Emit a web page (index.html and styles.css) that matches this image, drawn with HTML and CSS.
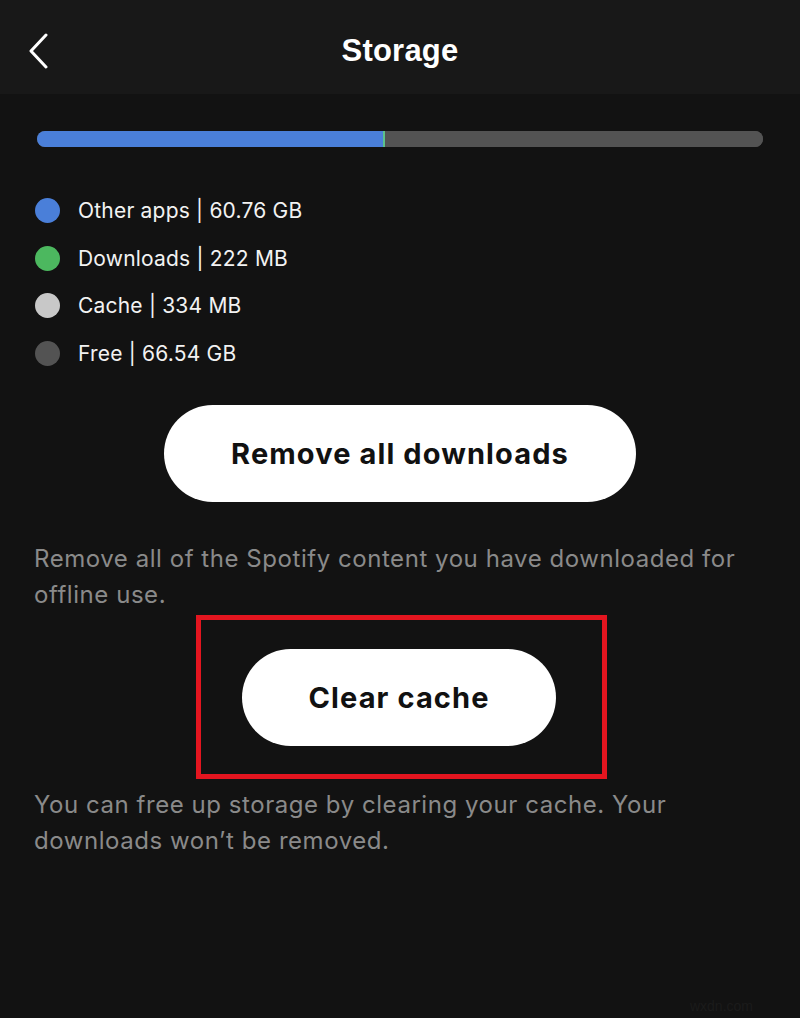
FILE: index.html
```html
<!DOCTYPE html>
<html lang="en">
<head>
<meta charset="utf-8">
<title>Storage</title>
<link rel="stylesheet" href="styles.css">
</head>
<body>
<div class="screen">
  <header class="topbar">
    <button class="back" aria-label="Back">
      <svg width="22" height="36" viewBox="0 0 22 36"><path d="M18 2 L3 18 L18 34" fill="none" stroke="#fff" stroke-width="3" stroke-linecap="round" stroke-linejoin="round"/></svg>
    </button>
    <h1 class="title">Storage</h1>
    <span class="spacer"></span>
  </header>

  <main class="content">
    <div class="usage-bar">
      <span class="seg seg-other" style="width:47.6%"></span>
      <span class="seg seg-downloads" style="width:0.3%"></span>
      <span class="seg seg-cache" style="width:0%"></span>
      <span class="seg seg-free"></span>
    </div>

    <ul class="legend">
      <li><span class="dot dot-other"></span>Other apps | 60.76 GB</li>
      <li><span class="dot dot-downloads"></span>Downloads | 222 MB</li>
      <li><span class="dot dot-cache"></span>Cache | 334 MB</li>
      <li><span class="dot dot-free"></span>Free | 66.54 GB</li>
    </ul>

    <div class="action">
      <button class="pill pill-wide">Remove all downloads</button>
    </div>
    <p class="note note-first">Remove all of the Spotify content you have downloaded for offline use.</p>

    <div class="action">
      <div class="highlight">
        <button class="pill pill-narrow">Clear cache</button>
      </div>
    </div>
    <p class="note note-second">You can free up storage by clearing your cache. Your downloads won’t be removed.</p>

    <div class="mark">wxdn.com</div>
  </main>
</div>
</body>
</html>
```

FILE: styles.css
```css
* {
  box-sizing: border-box;
}

html, body {
  margin: 0;
  padding: 0;
  background: #121212;
}

.screen {
  width: 800px;
  height: 1018px;
  background: #121212;
  display: flex;
  flex-direction: column;
  font-family: Inter, "Noto Sans", sans-serif;
  color: #fff;
  overflow: hidden;
}

/* top bar */
.topbar {
  height: 94px;
  background: #181818;
  display: grid;
  grid-template-columns: 90px 1fr 90px;
  align-items: center;
}

.back {
  background: none;
  border: 0;
  padding: 0 0 0 28px;
  margin-top: 8px;
  display: flex;
  align-items: center;
  cursor: pointer;
}

.title {
  margin: 7px 0 0 0;
  text-align: center;
  font-family: "Liberation Sans", Arial, sans-serif;
  font-weight: 700;
  font-size: 31px;
  letter-spacing: 0.2px;
  color: #fff;
}

/* content */
.content {
  flex: 1;
  padding: 37px 37px 0 34px;
  display: flex;
  flex-direction: column;
}

.usage-bar {
  margin-left: 3px;
  height: 16px;
  border-radius: 8px;
  overflow: hidden;
  display: flex;
  background: #535353;
}

.seg {
  height: 100%;
}

.seg-other { background: #4a7fd9; }
.seg-downloads { background: #5cc28a; }
.seg-cache { background: #cfcfcf; }
.seg-free { flex: 1; background: #535353; }

.legend {
  list-style: none;
  margin: 49px 0 0 0;
  padding: 0;
  display: flex;
  flex-direction: column;
  gap: 18px;
}

.legend li {
  display: flex;
  align-items: center;
  gap: 18px;
  height: 29.5px;
  font-size: 21px;
  color: #f2f2f2;
  letter-spacing: 0.2px;
}

.dot {
  width: 25px;
  height: 25px;
  border-radius: 50%;
  flex: none;
  margin-left: 1px;
}

.dot-other { background: #4a7fd9; }
.dot-downloads { background: #4cb85f; }
.dot-cache { background: #c8c8c8; }
.dot-free { background: #535353; }

.action {
  display: flex;
  justify-content: center;
}

.legend + .action {
  margin-top: 37px;
}

.pill {
  height: 97px;
  border: 0;
  border-radius: 49px;
  background: #fff;
  color: #111;
  font-family: Inter, "Noto Sans", sans-serif;
  font-weight: 700;
  font-size: 29px;
  letter-spacing: 1.1px;
  cursor: pointer;
}

.pill-wide {
  width: 472px;
  margin-left: 3px;
}

.pill-narrow {
  width: 314px;
}

.highlight {
  width: 411px;
  height: 164px;
  border: 5px solid #e3151f;
  display: flex;
  align-items: center;
  justify-content: center;
  margin-left: 5px;
}

.highlight .pill {
  margin-left: -4px;
}

.note {
  margin: 0;
  font-size: 24px;
  line-height: 36px;
  color: #8a8a8a;
  letter-spacing: 0.55px;
}

.note-first {
  margin-top: 39px;
  margin-bottom: 2px;
}

.note-second {
  margin-top: 8px;
}

.mark {
  margin-top: auto;
  margin-bottom: 4px;
  align-self: flex-end;
  font-family: "Liberation Sans", Arial, sans-serif;
  font-size: 14px;
  color: #1b1b1b;
  margin-right: 10px;
}
```
